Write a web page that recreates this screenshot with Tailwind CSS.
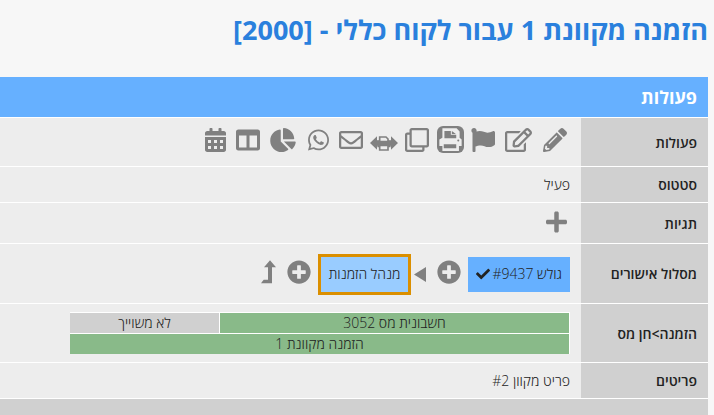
<!doctype html>
<html lang="he" dir="rtl">
    <head>
        <meta charset="UTF-8" />
        <meta name="viewport" content="width=device-width, initial-scale=1.0" />
        <title>הזמנה מקוונת 1</title>
        <script src="https://cdn.jsdelivr.net/npm/@tailwindcss/browser@4"></script>
    </head>
    <body
        class="min-h-screen flex flex-col bg-[#f7f7f7] pr-[6px] font-['Open_Sans','Noto_Sans',sans-serif] text-sm font-light text-[#222]"
    >
        <h1 class="h-[77px] pt-[10px] text-[27px] leading-[40px] font-bold text-[#2a80dd]">
            הזמנה מקוונת 1 עבור לקוח כללי - [2000]
        </h1>
        <h2
            class="border-b border-white bg-[#66b0ff] px-[11px] text-lg leading-[40px] font-bold text-white"
        >
            פעולות
        </h2>
        <table class="w-full border-collapse bg-[#ededed]">
            <tbody>
                <tr class="h-12 border-b border-white">
                    <th scope="row" class="w-[127px] bg-[#d0d0d0] px-[11px] pt-0.5 text-start font-semibold">פעולות</th>
                    <td class="px-[11px] pt-0.5">
                        <div class="flex items-center gap-[9px] pb-[6px] pr-[3px] text-[#808080]">
                            <button type="button" aria-label="עריכה" class="flex w-[25px] justify-center">
                                <svg class="size-6" viewBox="0 0 512 512" fill="currentColor">
                                    <path d="M497.9 142.1l-46.1 46.1c-4.7 4.7-12.3 4.7-17 0l-111-111c-4.7-4.7-4.7-12.3 0-17l46.1-46.1c18.7-18.7 49.1-18.7 67.9 0l60.1 60.1c18.8 18.7 18.8 49.1 0 67.9zM284.2 99.8L21.6 362.4.4 483.9c-2.9 16.4 11.4 30.6 27.8 27.8l121.5-21.3 262.6-262.6c4.7-4.7 4.7-12.3 0-17l-111-111c-4.8-4.7-12.4-4.7-17.1 0zM124.1 339.9c-5.5-5.5-5.5-14.3 0-19.8l154-154c5.5-5.5 14.3-5.5 19.8 0s5.5 14.3 0 19.8l-154 154c-5.5 5.5-14.3 5.5-19.8 0zM88 424h48v36.3l-64.5 11.3-31.1-31.1L51.7 376H88v48z" />
                                </svg>
                            </button>
                            <button type="button" aria-label="עדכון" class="flex w-[29px] justify-center">
                                <svg class="h-6 w-[27px]" viewBox="0 0 576 512" fill="currentColor">
                                    <path d="M402.3 344.9l32-32c5-5 13.7-1.5 13.7 5.7V464c0 26.5-21.5 48-48 48H48c-26.5 0-48-21.5-48-48V112c0-26.5 21.5-48 48-48h273.5c7.1 0 10.7 8.6 5.7 13.7l-32 32c-1.5 1.5-3.5 2.3-5.7 2.3H48v352h352V350.5c0-2.1.8-4.1 2.3-5.6zm156.6-201.8L296.3 405.7l-90.4 10c-26.2 2.9-48.5-19.2-45.6-45.6l10-90.4L432.9 17.1c22.9-22.9 59.9-22.9 82.7 0l43.2 43.2c22.9 22.9 22.9 60 .1 82.8zM460.1 174L402 115.9 216.2 301.8l-7.3 65.3 65.3-7.3L460.1 174zm64.8-79.7l-43.2-43.2c-4.1-4.1-10.8-4.1-14.8 0L436 82l58.1 58.1 30.9-30.9c4-4.2 4-10.8-.1-14.9z" />
                                </svg>
                            </button>
                            <button type="button" aria-label="דגל" class="flex w-6 justify-center">
                                <svg class="size-6" viewBox="0 0 512 512" fill="currentColor">
                                    <path d="M349.565 98.783C295.978 98.783 251.721 64 184.348 64c-24.955 0-47.309 4.384-68.045 12.013a55.947 55.947 0 0 0 3.586-23.562C118.117 24.015 94.806 1.206 66.338.048 34.345-1.254 8 24.296 8 56c0 19.026 9.497 35.825 24 45.945V488c0 13.255 10.745 24 24 24h16c13.255 0 24-10.745 24-24v-94.4c28.311-12.064 63.582-22.122 114.435-22.122 53.588 0 97.844 34.783 165.217 34.783 48.169 0 86.667-16.294 122.505-40.858C506.84 359.452 512 349.571 512 339.045v-243.1c0-23.393-24.269-38.87-45.485-29.016-34.338 15.948-76.454 31.854-116.95 31.854z" />
                                </svg>
                            </button>
                            <button type="button" aria-label="הדפסה" class="flex w-6 justify-center">
                                <svg class="size-[27px] shrink-0" viewBox="0 0 80 80" fill="currentColor">
                                    <rect width="80" height="80" rx="18" />
                                    <path fill="#ededed" d="M16 7h42l9 9v19l6 5v19h-8v15H16V59H7V40l9-5z" />
                                    <path d="M22 15h19v11h16v10H22zM44 15l12 9H44zM20 54h37v12H20z" />
                                    <circle cx="63" cy="43" r="3" />
                                </svg>
                            </button>
                            <button type="button" aria-label="שכפול" class="flex w-6 justify-center">
                                <svg class="size-6" viewBox="0 0 512 512" fill="currentColor">
                                    <path d="M464 0H144c-26.51 0-48 21.49-48 48v48H48c-26.51 0-48 21.49-48 48v320c0 26.51 21.49 48 48 48h320c26.51 0 48-21.49 48-48v-48h48c26.51 0 48-21.49 48-48V48c0-26.51-21.49-48-48-48zM362 464H54a6 6 0 0 1-6-6V150a6 6 0 0 1 6-6h42v224c0 26.51 21.49 48 48 48h224v42a6 6 0 0 1-6 6zm96-96H150a6 6 0 0 1-6-6V54a6 6 0 0 1 6-6h308a6 6 0 0 1 6 6v308a6 6 0 0 1-6 6z" />
                                </svg>
                            </button>
                            <button type="button" aria-label="הדפסה רחבה" class="flex w-6 justify-center pt-2">
                                <svg class="h-[15px] w-7 shrink-0" viewBox="0 0 84 45" fill="currentColor">
                                    <path d="M0 21L21 1v12h42V1l21 20-21 20V29H21v12z" />
                                    <path fill="#ededed" stroke="currentColor" stroke-width="5" d="M29 15V3h19l6 6v6M29 28h25v14H29z" />
                                    <path d="M22 14h40v20h-8v-6H30v6h-8z" />
                                </svg>
                            </button>
                            <button type="button" aria-label="דואר" class="flex w-6 justify-center">
                                <svg class="size-6" viewBox="0 0 512 512" fill="currentColor">
                                    <path d="M464 64H48C21.49 64 0 85.49 0 112v288c0 26.51 21.49 48 48 48h416c26.51 0 48-21.49 48-48V112c0-26.51-21.49-48-48-48zm0 48v40.805c-22.422 18.259-58.168 46.651-134.587 106.49-16.841 13.247-50.201 45.072-73.413 44.701-23.208.375-56.579-31.459-73.413-44.701C106.18 199.465 70.425 171.067 48 152.805V112h416zM48 400V214.398c22.914 18.251 55.409 43.862 104.938 82.646 21.857 17.205 60.134 55.186 103.062 54.955 42.717.231 80.509-37.199 103.053-54.947 49.528-38.783 82.032-64.401 104.947-82.653V400H48z" />
                                </svg>
                            </button>
                            <button type="button" aria-label="וואטסאפ" class="flex w-6 justify-center">
                                <svg class="h-6 w-[21px]" viewBox="0 0 448 512" fill="currentColor">
                                    <path d="M380.9 97.1C339 55.1 283.2 32 223.9 32c-122.4 0-222 99.6-222 222 0 39.1 10.2 77.3 29.6 111L0 480l117.7-30.9c32.4 17.7 68.9 27 106.1 27h.1c122.3 0 224.1-99.6 224.1-222 0-59.3-25.2-115-67.1-157zm-157 341.6c-33.2 0-65.7-8.9-94-25.7l-6.7-4-69.8 18.3L72 359.2l-4.4-7c-18.5-29.4-28.2-63.3-28.2-98.2 0-101.7 82.8-184.5 184.6-184.5 49.3 0 95.6 19.2 130.4 54.1 34.8 34.9 56.2 81.2 56.1 130.5 0 101.8-84.9 184.6-186.6 184.6zm101.2-138.2c-5.5-2.8-32.8-16.2-37.9-18-5.1-1.9-8.8-2.8-12.5 2.8-3.7 5.6-14.3 18-17.6 21.8-3.2 3.7-6.5 4.2-12 1.4-32.6-16.3-54-29.1-75.5-66-5.7-9.8 5.7-9.1 16.3-30.3 1.8-3.7.9-6.9-.5-9.7-1.4-2.8-12.5-30.1-17.1-41.2-4.5-10.8-9.1-9.3-12.5-9.5-3.2-.2-6.9-.2-10.6-.2-3.7 0-9.7 1.4-14.8 6.9-5.1 5.6-19.4 19-19.4 46.3 0 27.3 19.9 53.7 22.6 57.4 2.8 3.7 39.1 59.7 94.8 83.8 35.2 15.2 49 16.5 66.6 13.9 10.7-1.6 32.8-13.4 37.4-26.4 4.6-13 4.6-24.1 3.2-26.4-1.3-2.5-5-3.9-10.5-6.6z" />
                                </svg>
                            </button>
                            <button type="button" aria-label="תרשים" class="flex w-7 justify-center">
                                <svg class="h-6 w-[26px]" viewBox="0 0 544 512" fill="currentColor">
                                    <path d="M527.79 288H290.5l158.03 158.03c6.04 6.04 15.98 6.53 22.19.68 38.7-36.46 65.32-85.61 73.13-140.86 1.34-9.46-6.51-17.85-16.06-17.85zm-15.83-64.8C503.72 103.74 408.26 8.28 288.8.04 279.68-.59 272 7.1 272 16.24V240h223.77c9.14 0 16.82-7.68 16.19-16.8zM224 288V50.71c0-9.55-8.39-17.4-17.84-16.06C86.99 51.49-4.1 155.6.14 280.37 4.5 408.51 114.83 513.59 243.03 511.98c50.4-.63 96.97-16.87 135.26-44.03 7.9-5.6 8.42-17.23 1.57-24.08L224 288z" />
                                </svg>
                            </button>
                            <button type="button" aria-label="עמודות" class="flex w-6 justify-center">
                                <svg class="size-6" viewBox="0 0 512 512" fill="currentColor">
                                    <path d="M464 32H48C21.49 32 0 53.49 0 80v352c0 26.51 21.49 48 48 48h416c26.51 0 48-21.49 48-48V80c0-26.51-21.49-48-48-48zM224 416H64V160h160v256zm224 0H288V160h160v256z" />
                                </svg>
                            </button>
                            <button type="button" aria-label="יומן" class="flex w-6 justify-center">
                                <svg class="h-6 w-[21px]" viewBox="0 0 448 512" fill="currentColor">
                                    <path d="M400 64h-48V16c0-8.8-7.2-16-16-16h-32c-8.8 0-16 7.2-16 16v48H160V16c0-8.8-7.2-16-16-16h-32c-8.8 0-16 7.2-16 16v48H48C21.5 64 0 85.5 0 112v48h448v-48c0-26.5-21.5-48-48-48z" />
                                    <path fill-rule="evenodd" d="M0 192h448v272c0 26.5-21.5 48-48 48H48c-26.5 0-48-21.5-48-48zM64 256v64h64v-64zM192 256v64h64v-64zM320 256v64h64v-64zM64 384v64h64v-64zM192 384v64h64v-64zM320 384v64h64v-64z" />
                                </svg>
                            </button>
                        </div>
                    </td>
                </tr>
                <tr class="h-9 border-b border-white">
                    <th scope="row" class="bg-[#d0d0d0] px-[11px] pt-0.5 text-start font-semibold">סטטוס</th>
                    <td class="px-[11px] pt-0.5">פעיל</td>
                </tr>
                <tr class="h-[41px] border-b border-white">
                    <th scope="row" class="bg-[#d0d0d0] px-[11px] pt-0.5 text-start font-semibold">תגיות</th>
                    <td class="px-[11px] pt-0.5">
                        <button type="button" aria-label="הוספת תגית" class="flex px-[3px] pb-1 text-[#808080]">
                            <svg class="h-6 w-[21px]" viewBox="0 0 448 512" fill="currentColor">
                                <path d="M416 208H272V64c0-17.67-14.33-32-32-32h-32c-17.67 0-32 14.33-32 32v144H32c-17.67 0-32 14.33-32 32v32c0 17.67 14.33 32 32 32h144v144c0 17.67 14.33 32 32 32h32c17.67 0 32-14.33 32-32V304h144c17.67 0 32-14.33 32-32v-32c0-17.67-14.33-32-32-32z" />
                            </svg>
                        </button>
                    </td>
                </tr>
                <tr class="h-[60px] border-b border-white">
                    <th scope="row" class="bg-[#d0d0d0] px-[11px] pt-0.5 text-start font-semibold">מסלול אישורים</th>
                    <td class="px-[11px] pt-0.5">
                        <div class="flex items-center text-[#808080]">
                            <div class="flex h-[35px] items-center gap-0.5 bg-[#66b0ff] px-2 text-[#222]">
                                <span>גולש <bdi dir="ltr">#9437</bdi></span>
                                <svg class="size-[14px]" viewBox="0 0 512 512" fill="currentColor">
                                    <path d="M173.898 439.404l-166.4-166.4c-9.997-9.997-9.997-26.206 0-36.204l36.203-36.204c9.997-9.998 26.207-9.998 36.204 0L192 312.69 432.095 72.596c9.997-9.997 26.207-9.997 36.204 0l36.203 36.204c9.997 9.997 9.997 26.206 0 36.204l-294.4 294.401c-9.998 9.997-26.207 9.997-36.204-.001z" />
                                </svg>
                            </div>
                            <button type="button" aria-label="הוספת שלב" class="mx-[7px] pb-[5px]">
                                <svg class="size-6" viewBox="0 0 512 512" fill="currentColor">
                                    <path d="M256 8C119 8 8 119 8 256s111 248 248 248 248-111 248-248S393 8 256 8zm144 276c0 6.6-5.4 12-12 12h-92v92c0 6.6-5.4 12-12 12h-56c-6.6 0-12-5.4-12-12v-92h-92c-6.6 0-12-5.4-12-12v-56c0-6.6 5.4-12 12-12h92v-92c0-6.6 5.4-12 12-12h56c6.6 0 12 5.4 12 12v92h92c6.6 0 12 5.4 12 12v56z" />
                                </svg>
                            </button>
                            <svg class="mr-1 ml-[3px] h-[15px] w-3" viewBox="0 0 12 15" fill="currentColor">
                                <path d="M12 0v15L0 7.5z" />
                            </svg>
                            <div class="flex h-[41px] items-center border-3 border-[#db8f00] bg-[#99ccff] px-2 text-[#222]">
                                מנהל הזמנות
                            </div>
                            <button type="button" aria-label="הוספת שלב" class="mx-[7px] pb-[5px]">
                                <svg class="size-6" viewBox="0 0 512 512" fill="currentColor">
                                    <path d="M256 8C119 8 8 119 8 256s111 248 248 248 248-111 248-248S393 8 256 8zm144 276c0 6.6-5.4 12-12 12h-92v92c0 6.6-5.4 12-12 12h-56c-6.6 0-12-5.4-12-12v-92h-92c-6.6 0-12-5.4-12-12v-56c0-6.6 5.4-12 12-12h92v-92c0-6.6 5.4-12 12-12h56c6.6 0 12 5.4 12 12v92h92c6.6 0 12 5.4 12 12v56z" />
                                </svg>
                            </button>
                            <button type="button" aria-label="העלאת שלב" class="mr-1 pb-[5px]">
                                <svg class="h-6 w-[15px]" viewBox="0 0 45 72" fill="currentColor">
                                    <path d="M27 1l18 21H33v48H0l8-11h13V22H9z" />
                                </svg>
                            </button>
                        </div>
                    </td>
                </tr>
                <tr class="h-[59px] border-b border-white">
                    <th scope="row" class="bg-[#d0d0d0] px-[11px] pt-0.5 text-start font-semibold">הזמנה&gt;חן מס</th>
                    <td class="px-[11px]">
                        <div class="grid w-[500px] grid-cols-[350px_1fr] border-r border-white text-center leading-5">
                            <div class="border-t border-l border-white bg-[#89ba89]">חשבונית מס 3052</div>
                            <div class="border-t border-white bg-[#d0d0d0]">לא משוייך</div>
                            <div class="col-span-2 border-t border-white bg-[#89ba89]">הזמנה מקוונת 1</div>
                        </div>
                    </td>
                </tr>
                <tr class="h-9 border-b border-white">
                    <th scope="row" class="bg-[#d0d0d0] px-[11px] pt-0.5 text-start font-semibold">פריטים</th>
                    <td class="px-[11px] pt-0.5">פריט מקוון <bdi dir="ltr">#2</bdi></td>
                </tr>
            </tbody>
        </table>
        <div class="min-h-4 grow bg-[#d0d0d0]"></div>
    </body>
</html>
